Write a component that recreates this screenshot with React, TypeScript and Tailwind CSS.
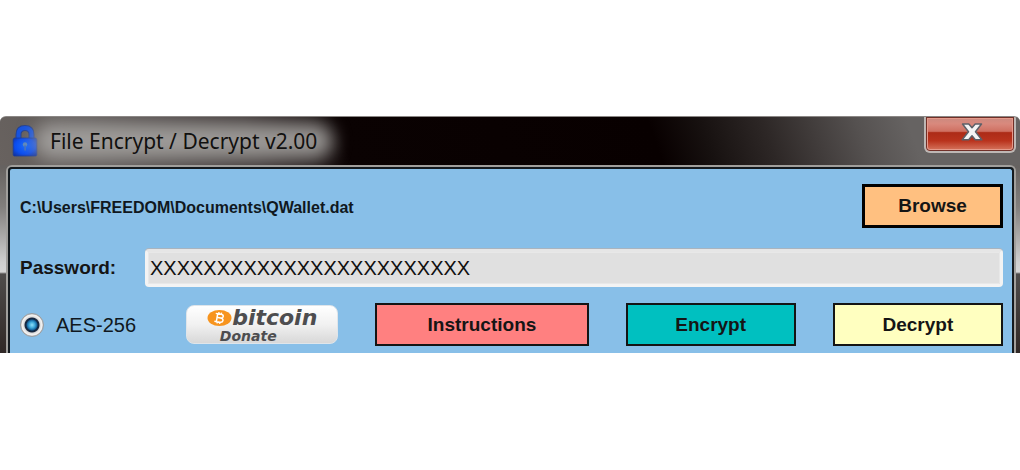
import { useState } from "react";

const buttonFont =
  "font-['Liberation_Sans',Arial,sans-serif] text-[19px] leading-6 font-bold text-[#151515]";

function PadlockIcon() {
  return (
    <svg width="26" height="32" viewBox="0 0 26 32" aria-hidden="true">
      <defs>
        <radialGradient id="lock-body" cx="0.5" cy="0.45" r="0.65">
          <stop offset="0" stopColor="#1266ff" />
          <stop offset="0.65" stopColor="#0a4df0" />
          <stop offset="1" stopColor="#1236a8" />
        </radialGradient>
      </defs>
      <path
        d="M6.500 15V9.500C6.500 5 9 3 13 3S19.500 5 19.500 9.500V15"
        fill="none"
        stroke="#24408f"
        strokeWidth="6"
      />
      <path
        d="M6.500 15V9.500C6.500 5 9 3 13 3S19.500 5 19.500 9.500V15"
        fill="none"
        stroke="#1552df"
        strokeWidth="4"
      />
      <path
        d="M3 13h20c1.200 0 1.800.8 1.800 2v14.500c0 1-.6 1.500-1.500 1.500H2.700c-.9 0-1.500-.5-1.500-1.500V15c0-1.200.6-2 1.800-2Z"
        fill="url(#lock-body)"
        stroke="#1b3c9c"
        strokeWidth="0.8"
      />
      <circle cx="13" cy="19.500" r="2.200" fill="#5b87bd" />
      <path d="M12.200 20.500h1.800v5h-1.800z" fill="#3d6fc4" />
    </svg>
  );
}

function CloseIcon() {
  return (
    <svg width="24" height="20" viewBox="0 0 24 20" aria-hidden="true">
      <path
        d="M2.500 2h6.300L12 5.700 15.200 2h6.300l-6 7.800 6.300 8h-6.500L12 13.800l-3.300 4H2.200l6.300-8Z"
        fill="#f4f4f4"
        stroke="#5d6068"
        strokeWidth="1.500"
        strokeLinejoin="round"
      />
    </svg>
  );
}

function BitcoinMark() {
  return (
    <svg width="25" height="18" viewBox="0 0 25 18" aria-hidden="true">
      <ellipse cx="12.500" cy="9" rx="12" ry="8" fill="#f7941e" />
      <g fill="none" stroke="#fff" strokeWidth="1.500" transform="rotate(10 12 9)">
        <path d="M8 5h5.500c3.200 0 3.200 3.700 0 3.700H9.500M13.500 8.700c4 0 3.600 4.300 0 4.300H8M10 5v8M11 3.200V5M13.600 3.200V5M11 13v1.700M13.600 13v1.700" />
      </g>
    </svg>
  );
}

export default function App() {
  const [password, setPassword] = useState("XXXXXXXXXXXXXXXXXXXXXXXX");

  return (
    <main className="min-h-screen bg-white pt-29">
      <section className="rounded-t-md border-t border-[#8b8785] bg-[linear-gradient(180deg,#666260_0px,#666260_50px,#827f7d_90px,#cfcfcf_145px,#d6d6d6_155px,#4f4c4b_157px,#302826_236px)]">
        <header className="flex h-12 items-center justify-between overflow-hidden rounded-t-md bg-[linear-gradient(70deg,#68625f_0%,#5f5a58_10%,#3b3433_25%,#0a0202_34%,#080000_64%,#171110_69%,#2d2726_75%,#555150_84%,#666362_89%)] pl-3">
          <div className="flex items-center gap-3">
            <PadlockIcon />
            <h1 className="relative font-['Noto_Sans','Open_Sans',sans-serif] text-[21px] leading-7 text-[#11100f]">
              <span className="absolute -inset-x-4 -inset-y-1 rounded-full bg-[#a5a3a1]/90 blur-[9px]" />
              <span className="relative">File Encrypt / Decrypt v2.00</span>
            </h1>
          </div>
          <button
            type="button"
            aria-label="Close"
            className="mr-1 flex h-9 w-[92px] items-center justify-center self-start rounded-b-md border-2 border-t-0 border-[#bdb7b4] bg-[linear-gradient(180deg,#c98a80_0%,#d9897d_20%,#cf7062_42%,#ad2b17_46%,#b9331d_70%,#d87a63_100%)] pb-1 pl-1 shadow-[inset_0_0_0_1px_#713028,inset_0_0_0_2px_#e59a8b]"
          >
            <CloseIcon />
          </button>
        </header>

        <form
          className="mr-1 ml-1.5 rounded-t-md border-2 border-b-0 border-[#a19f9c]"
          onSubmit={(event) => event.preventDefault()}
        >
          <div className="flex flex-col rounded-t-sm border-2 border-b-0 border-[#141a1f] bg-[#88bfe8] pt-[15px] pr-[9px] pb-[7px] pl-2.5">
            <div className="flex items-center justify-between">
              <p className="pt-1 font-['Liberation_Sans',Arial,sans-serif] text-[16px] leading-6 font-bold text-[#101820]">
                C:\Users\FREEDOM\Documents\QWallet.dat
              </p>
              <button
                type="button"
                className={`h-11 w-[141px] border-3 border-black bg-[#ffc080] ${buttonFont}`}
              >
                Browse
              </button>
            </div>

            <div className="mt-[21px] flex items-center">
              <label
                htmlFor="password"
                className={`w-[125px] shrink-0 ${buttonFont}`}
              >
                Password:
              </label>
              <input
                id="password"
                type="text"
                value={password}
                onChange={(event) => setPassword(event.target.value)}
                className="h-[38px] min-w-0 flex-1 rounded-sm border-3 border-[#f3f3f3] border-t-[#e6e6e6] bg-[#e0e0e0] px-0.5 font-['Liberation_Sans',Arial,sans-serif] text-[20px] text-[#101010] shadow-[inset_0_0_0_1px_#e8e8e8,0_-1px_0_#a9b4bf] outline-none"
              />
            </div>

            <div className="mt-4 grid grid-cols-[129fr_152fr_213fr_170fr_170fr] items-center gap-x-[37px]">
              <label className="flex items-center gap-3 font-['Liberation_Sans',Arial,sans-serif] text-[20px] leading-7 whitespace-nowrap text-[#101820]">
                <input
                  type="radio"
                  name="cipher"
                  defaultChecked
                  className="size-6 shrink-0 appearance-none rounded-full border border-[#9a9da0] bg-[radial-gradient(circle_at_50%_50%,#8fe0fa_0px,#3ba7d8_3px,#15629c_5px,#10253f_6px,#1b2c44_7px,#dcdcdc_8px,#f4f4f4_10px,#c9c9c9_11px)]"
                />
                AES-256
              </label>
              <button
                type="button"
                className="flex h-[39px] flex-col items-center rounded-lg border border-[#dfe5ea] bg-linear-to-b from-white via-[#f1f1f1] to-[#d8d8d8] pt-0.5 font-['DejaVu_Sans',sans-serif] font-bold text-[#4d4d4f] italic"
              >
                <span className="flex items-center text-[22px] leading-5">
                  <BitcoinMark />
                  bitcoin
                </span>
                <span className="mr-7 text-[14px] leading-4">Donate</span>
              </button>
              <button
                type="button"
                className={`h-[43px] border-2 border-[#141414] bg-[#ff8080] ${buttonFont}`}
              >
                Instructions
              </button>
              <button
                type="button"
                className={`h-[43px] border-2 border-[#141414] bg-[#00c0c0] ${buttonFont}`}
              >
                Encrypt
              </button>
              <button
                type="button"
                className={`h-[43px] border-2 border-[#141414] bg-[#ffffc0] ${buttonFont}`}
              >
                Decrypt
              </button>
            </div>
          </div>
        </form>
      </section>
    </main>
  );
}
